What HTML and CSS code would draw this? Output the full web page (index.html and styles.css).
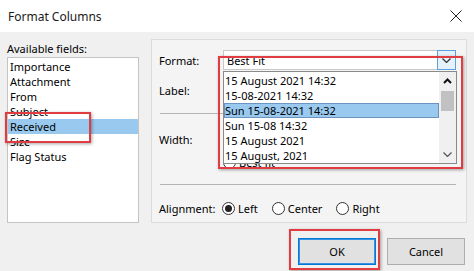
FILE: index.html
```html
<!DOCTYPE html>
<html lang="en">
<head>
  <meta charset="UTF-8">
  <title>Format Columns</title>
  <link rel="stylesheet" href="styles.css">
</head>
<body>

<div class="window">
  <div class="titlebar">
    <span class="title">Format Columns</span>
    <svg class="close" width="12" height="12" viewBox="0 0 12 12">
      <path d="M0.5 0.5 L11.5 11.5 M11.5 0.5 L0.5 11.5" stroke="#222" stroke-width="1" fill="none"/>
    </svg>
  </div>

  <div class="main">
    <div class="fields">
      <div class="fields-label">Available fields:</div>
      <ul class="field-list">
        <li>Importance</li>
        <li>Attachment</li>
        <li>From</li>
        <li>Subject</li>
        <li class="selected">Received</li>
        <li>Size</li>
        <li>Flag Status</li>
      </ul>
    </div>

    <div class="group">
      <div class="row row-format">
        <span class="lbl">Format:</span>
        <div class="combo">
          <span>Best Fit</span>
          <span class="combo-btn">
            <svg width="9" height="5" viewBox="0 0 9 5"><path d="M0.5 0.5 L4.5 4.5 L8.5 0.5" stroke="#333" stroke-width="1.2" fill="none"/></svg>
          </span>
        </div>
      </div>

      <div class="row row-label">
        <span class="lbl">Label:</span>
      </div>

      <div class="sep"></div>

      <div class="row-width">
        <span class="lbl">Width:</span>
        <div class="width-opts">
          <div class="spin"></div>
          <label class="radio"><span class="dot"></span>Best fit</label>
        </div>
      </div>

      <div class="sep sep-2"></div>

      <div class="row row-align">
        <span class="lbl">Alignment:</span>
        <label class="radio"><span class="dot checked"></span>Left</label>
        <label class="radio"><span class="dot"></span>Center</label>
        <label class="radio"><span class="dot"></span>Right</label>
      </div>

      <div class="dropdown">
        <ul class="options">
          <li>15 August 2021 14:32</li>
          <li>15-08-2021 14:32</li>
          <li class="selected">Sun 15-08-2021 14:32</li>
          <li>Sun 15-08 14:32</li>
          <li>15 August 2021</li>
          <li>15 August, 2021</li>
        </ul>
        <div class="scrollbar">
          <div class="arrow">
            <svg width="9" height="6" viewBox="0 0 9 6"><path d="M1 5 L4.5 1.5 L8 5" stroke="#111" stroke-width="2" fill="none"/></svg>
          </div>
          <div class="thumb"></div>
          <div class="arrow arrow-down">
            <svg width="9" height="5" viewBox="0 0 9 5"><path d="M0.5 0.5 L4.5 4.5 L8.5 0.5" stroke="#555" stroke-width="1.2" fill="none"/></svg>
          </div>
        </div>
      </div>
    </div>
  </div>

  <div class="buttons">
    <button class="btn btn-default">OK</button>
    <button class="btn">Cancel</button>
  </div>

  <div class="mark mark-received"></div>
  <div class="mark mark-format"></div>
  <div class="mark mark-ok"></div>
</div>

</body>
</html>
```

FILE: styles.css
```css
* {
  box-sizing: border-box;
}
body {
  margin: 0;
  font-family: "Noto Sans", sans-serif;
  font-size: 11px;
  color: #000;
  background: #f0f0f0;
}
.window {
  position: relative;
  width: 474px;
  height: 271px;
  background: #f0f0f0;
  overflow: hidden;
}
.titlebar {
  height: 32px;
  background: #fff;
  display: flex;
  align-items: center;
  justify-content: space-between;
  padding: 0 12px 0 8px;
}
.title {
  font-size: 12px;
  color: #1a1a1a;
}
.main {
  display: flex;
  height: 191px;
  padding: 7px 7px 0;
}
.fields {
  width: 132px;
  margin-right: 12px;
  display: flex;
  flex-direction: column;
}
.fields-label {
  height: 18px;
  padding-top: 2px;
  line-height: 15px;
}
.field-list {
  flex: 1;
  list-style: none;
  margin: 0;
  padding: 1px 0 0;
  background: #fff;
  border: 1px solid #c4c4c4;
}
.field-list li {
  height: 15px;
  line-height: 15px;
  padding-left: 2px;
}
.field-list li.selected {
  background: #99c9ef;
}
.group {
  position: relative;
  width: 316px;
  height: 184px;
  border: 1px solid #dcdcdc;
  background: #f4f4f4;
  padding: 0 10px 0 7px;
}
.row {
  display: flex;
  align-items: center;
  height: 20px;
}
.lbl {
  width: 64px;
  flex-shrink: 0;
}
.row-format {
  margin-top: 10px;
}
.combo {
  width: 233px;
  height: 20px;
  display: flex;
  align-items: center;
  justify-content: space-between;
  padding-left: 3px;
  background: #fff;
  border: 1px solid #c8c8c8;
}
.combo-btn {
  width: 19px;
  height: 20px;
  margin-right: -1px;
  display: flex;
  align-items: center;
  justify-content: center;
  background: #e5f1fb;
  border: 1px solid #5a9fe0;
}
.row-label {
  margin-top: 10px;
}
.sep {
  height: 1px;
  margin: 13px 0 0 1px;
  background: #b4b4b4;
}
.sep-2 {
  margin-top: 14px;
}
.row-width {
  display: flex;
  margin-top: 16px;
}
.row-width .lbl {
  height: 20px;
  line-height: 20px;
}
.spin {
  height: 20px;
}
.width-opts .radio {
  margin-top: 5px;
  height: 15px;
}
.radio {
  display: flex;
  align-items: center;
  margin-right: 14px;
}
.dot {
  width: 13px;
  height: 13px;
  margin-right: 3px;
  border: 1px solid #333;
  border-radius: 50%;
  background: #fff;
  display: flex;
  align-items: center;
  justify-content: center;
}
.dot.checked::after {
  content: "";
  width: 7px;
  height: 7px;
  border-radius: 50%;
  background: #222;
}
.row-align {
  margin-top: 13px;
}
.row-align .lbl {
  width: 63px;
}
.dropdown {
  position: absolute;
  left: 71px;
  top: 31px;
  width: 234px;
  height: 93px;
  display: flex;
  background: #fff;
  border: 1px solid #8a8a8a;
}
.options {
  flex: 1;
  list-style: none;
  margin: 0;
  padding: 1px 0 0;
}
.options li {
  height: 15px;
  line-height: 15px;
  padding-left: 1px;
}
.options li.selected {
  background: #99c9ef;
  box-shadow: inset 0 0 0 1px #6d93bf;
}
.scrollbar {
  width: 17px;
  display: flex;
  flex-direction: column;
  background: #f0f0f0;
}
.arrow {
  height: 17px;
  display: flex;
  align-items: center;
  justify-content: center;
}
.arrow-down {
  margin-top: auto;
}
.thumb {
  height: 20px;
  margin: 2px 2px 0;
  background: #c1c1c1;
}
.buttons {
  display: flex;
  justify-content: flex-end;
  gap: 11px;
  padding: 15px 9px 0 0;
}
.btn {
  width: 78px;
  height: 27px;
  font-family: "Noto Sans", sans-serif;
  font-size: 11px;
  color: #000;
  background: #e1e1e1;
  border: 1px solid #adadad;
  padding: 0;
}
.btn-default {
  border-color: #0078d7;
  box-shadow: inset 0 0 0 1px #3c92e0;
}
.mark {
  position: absolute;
  border: 2px solid #e03c41;
  box-shadow: 1px 1px 3px rgba(0, 0, 0, 0.35);
}
.mark-received {
  left: 5px;
  top: 112px;
  width: 86px;
  height: 31px;
}
.mark-format {
  left: 218px;
  top: 56px;
  width: 245px;
  height: 113px;
}
.mark-ok {
  left: 289px;
  top: 229px;
  width: 91px;
  height: 41px;
}
```
